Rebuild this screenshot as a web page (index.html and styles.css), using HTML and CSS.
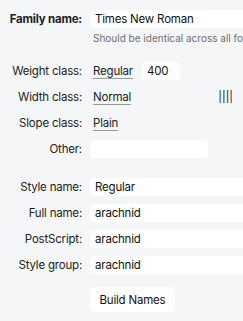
FILE: index.html
```html
<html>

<head>
	<title>Font Info</title>
	<meta charset="UTF-8">
	<link rel="stylesheet" href="styles.css">
</head>

<body>
	<div class="panel">
		<div class="row top">
			<div class="label bold">Family name:</div>
			<div class="field">
				<input type="text" class="box wide" value="Times New Roman">
				<div class="hint">Should be identical across all fo</div>
			</div>
		</div>

		<div class="group">
			<div class="row">
				<div class="label">Weight class:</div>
				<div class="field inline">
					<span class="popup">Regular</span>
					<input type="text" class="box num" value="400">
				</div>
			</div>
			<div class="row">
				<div class="label">Width class:</div>
				<div class="field inline">
					<span class="popup">Normal</span>
					<span class="bars">||||</span>
				</div>
			</div>
			<div class="row">
				<div class="label">Slope class:</div>
				<div class="field inline">
					<span class="popup">Plain</span>
				</div>
			</div>
			<div class="row">
				<div class="label">Other:</div>
				<div class="field">
					<input type="text" class="box other" value="">
				</div>
			</div>
		</div>

		<div class="group names">
			<div class="row">
				<div class="label">Style name:</div>
				<div class="field"><input type="text" class="box wide" value="Regular"></div>
			</div>
			<div class="row">
				<div class="label">Full name:</div>
				<div class="field"><input type="text" class="box wide" value="arachnid"></div>
			</div>
			<div class="row">
				<div class="label">PostScript:</div>
				<div class="field"><input type="text" class="box wide" value="arachnid"></div>
			</div>
			<div class="row">
				<div class="label">Style group:</div>
				<div class="field"><input type="text" class="box wide" value="arachnid"></div>
			</div>
		</div>

		<div class="row">
			<div class="label"></div>
			<div class="field"><button class="btn">Build Names</button></div>
		</div>
	</div>
</body>

</html>
```

FILE: styles.css
```css
body {
	margin: 0;
	background: #f5f6f8;
	font-family: Inter, "Noto Sans", sans-serif;
	font-size: 11.5px;
	letter-spacing: -0.2px;
	color: #222;
	overflow: hidden;
}

.panel {
	padding-top: 10px;
	width: 243px;
}

.row {
	display: flex;
	flex-direction: row;
	align-items: flex-start;
}

.label {
	width: 82px;
	flex: none;
	text-align: right;
	line-height: 18px;
	height: 18px;
	color: #222;
}

.bold {
	font-weight: bold;
}

.field {
	margin-left: 8px;
	flex: 1;
	min-width: 0;
}

.field.inline {
	display: flex;
	flex-direction: row;
	align-items: center;
	height: 18px;
}

.group {
	display: flex;
	flex-direction: column;
	gap: 8px;
	margin-top: 18px;
}

.group.names {
	margin-top: 20px;
}

.box {
	display: block;
	box-sizing: border-box;
	height: 18px;
	border: none;
	border-radius: 3px;
	background: #fff;
	padding: 0 5px;
	font-family: Inter, "Noto Sans", sans-serif;
	font-size: 11.5px;
	letter-spacing: -0.2px;
	color: #111;
	outline: none;
}

.wide {
	width: 160px;
}

.num {
	width: 38px;
	margin-left: 9px;
}

.other {
	width: 118px;
}

.hint {
	font-size: 10px;
	letter-spacing: 0;
	line-height: 12px;
	color: #6e6e70;
	margin-top: 4px;
	padding-left: 3px;
	white-space: nowrap;
}

.popup {
	margin-left: 3px;
	line-height: 14px;
	border-bottom: 1px solid #9a9a9c;
}

.bars {
	margin-left: auto;
	margin-right: 10px;
	font-size: 11px;
	letter-spacing: 0;
	color: #111;
}

.btn {
	margin-top: 13px;
	width: 85px;
	height: 25px;
	border: none;
	border-radius: 5px;
	background: #fff;
	font-family: Inter, "Noto Sans", sans-serif;
	font-size: 11.5px;
	letter-spacing: -0.2px;
	color: #111;
	padding: 0;
}
```
